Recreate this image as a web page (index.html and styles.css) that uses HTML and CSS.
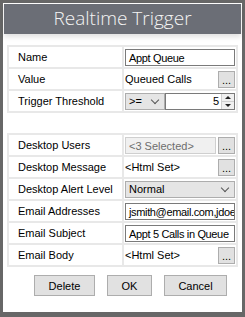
FILE: index.html
```html
<!DOCTYPE html>
<html lang="en">
<head>
	<meta charset="UTF-8">
	<title>Realtime Trigger</title>
	<link rel="stylesheet" href="styles.css">
</head>
<body>
	<div class="dialog">
		<div class="title">Realtime Trigger</div>
		<div class="content">
			<table class="props">
				<tr>
					<td class="label">Name</td>
					<td class="value"><div class="textbox">Appt Queue</div></td>
				</tr>
				<tr>
					<td class="label">Value</td>
					<td class="value"><div class="picker"><span class="plain">Queued Calls</span><span class="dots">...</span></div></td>
				</tr>
				<tr>
					<td class="label">Trigger Threshold</td>
					<td class="value">
						<div class="picker">
							<div class="combo small">&gt;=<span class="chev"></span></div>
							<div class="numeric"><span class="num">5</span><span class="spin"><span class="up"></span><span class="down"></span></span></div>
						</div>
					</td>
				</tr>
			</table>

			<table class="props second">
				<tr>
					<td class="label">Desktop Users</td>
					<td class="value"><div class="picker"><div class="textbox disabled">&lt;3 Selected&gt;</div><span class="dots">...</span></div></td>
				</tr>
				<tr>
					<td class="label">Desktop Message</td>
					<td class="value"><div class="picker"><span class="plain">&lt;Html Set&gt;</span><span class="dots">...</span></div></td>
				</tr>
				<tr>
					<td class="label">Desktop Alert Level</td>
					<td class="value"><div class="combo">Normal<span class="chev"></span></div></td>
				</tr>
				<tr>
					<td class="label">Email Addresses</td>
					<td class="value"><div class="textbox">jsmith@email.com,jdoe@email.com</div></td>
				</tr>
				<tr>
					<td class="label">Email Subject</td>
					<td class="value"><div class="textbox">Appt 5 Calls in Queue</div></td>
				</tr>
				<tr>
					<td class="label">Email Body</td>
					<td class="value"><div class="picker"><span class="plain">&lt;Html Set&gt;</span><span class="dots">...</span></div></td>
				</tr>
			</table>

			<div class="buttons">
				<button class="btn delete">Delete</button>
				<button class="btn ok">OK</button>
				<button class="btn cancel">Cancel</button>
			</div>
		</div>
	</div>
</body>
</html>
```

FILE: styles.css
```css
body {
	margin: 0;
	background-color: #676767;
}
.dialog {
	box-sizing: border-box;
	width: 245px;
	height: 317px;
	border: 3px solid #676767;
	border-bottom-width: 5px;
	background-color: #fff;
	font-family: "Liberation Sans", Arial, sans-serif;
	font-size: 11px;
	color: #000;
}
.title {
	height: 30px;
	margin: 1px 1px 0 1px;
	background-color: #6b6e76;
	color: #f4f4f4;
	font-family: "Open Sans", sans-serif;
	font-weight: 300;
	font-size: 19px;
	line-height: 29px;
	text-align: center;
	box-shadow: 0 3px 5px rgba(0,0,0,.12);
}
.content {
	padding: 11px 0 0 4px;
}

/* property tables */
.props {
	width: 231px;
	border-collapse: collapse;
	border: 2px solid #e8e8e8;
	table-layout: fixed;
}
.props.second {
	margin-top: 20px;
}
.props td {
	height: 22px;
	box-sizing: border-box;
	padding: 0;
	border: 2px solid #e8e8e8;
	white-space: nowrap;
	overflow: hidden;
}
.props td.label {
	width: 115px;
	padding-left: 9px;
}
.props td.value {
	padding: 1px;
}

.textbox {
	box-sizing: border-box;
	height: 17px;
	border: 1px solid #7a7a7a;
	background-color: #fff;
	padding: 1px 0 0 3px;
	line-height: 14px;
	letter-spacing: -0.35px;
	overflow: hidden;
	white-space: nowrap;
}
.textbox.disabled {
	flex: 1;
	border-color: #cfcfcf;
	background-color: #f0f0f0;
	color: #6d6d6d;
	letter-spacing: 0;
}
.picker {
	display: flex;
	align-items: center;
	gap: 2px;
	height: 17px;
}
.plain {
	flex: 1;
	line-height: 17px;
}
.dots {
	box-sizing: border-box;
	width: 17px;
	height: 17px;
	border: 1px solid #adadad;
	background-color: #e1e1e1;
	text-align: center;
	line-height: 16px;
}
.combo {
	box-sizing: border-box;
	display: flex;
	align-items: center;
	height: 17px;
	border: 1px solid #adadad;
	background-color: #e5e5e5;
	padding-left: 3px;
}
.combo.small {
	width: 40px;
}
.chev {
	width: 5px;
	height: 5px;
	margin: -3px 6px 0 auto;
	border-right: 1px solid #555;
	border-bottom: 1px solid #555;
	transform: rotate(45deg);
}
.numeric {
	box-sizing: border-box;
	flex: 1;
	display: flex;
	height: 17px;
	border: 1px solid #7a7a7a;
	background-color: #fff;
	margin-left: -2px;
}
.num {
	flex: 1;
	text-align: right;
	padding-right: 2px;
	line-height: 15px;
}
.spin {
	display: flex;
	flex-direction: column;
	width: 12px;
	border-left: 1px solid #d0d0d0;
}
.spin .up,
.spin .down {
	flex: 1;
	position: relative;
	background-color: #f0f0f0;
}
.spin .up {
	border-bottom: 1px solid #d0d0d0;
}
.spin .up:after,
.spin .down:after {
	content: "";
	position: absolute;
	left: 3px;
	top: 2px;
	border-left: 3px solid transparent;
	border-right: 3px solid transparent;
}
.spin .up:after {
	border-bottom: 3px solid #222;
}
.spin .down:after {
	border-top: 3px solid #222;
}

/* buttons */
.buttons {
	display: flex;
	gap: 12px;
	margin-top: 8px;
	padding-left: 27px;
}
.btn {
	height: 21px;
	padding: 0;
	border: 1px solid #adadad;
	background-color: #e1e1e1;
	font-family: "Liberation Sans", Arial, sans-serif;
	font-size: 11px;
	color: #000;
}
.btn.delete { width: 61px; }
.btn.ok { width: 45px; }
.btn.cancel { width: 63px; }
```
